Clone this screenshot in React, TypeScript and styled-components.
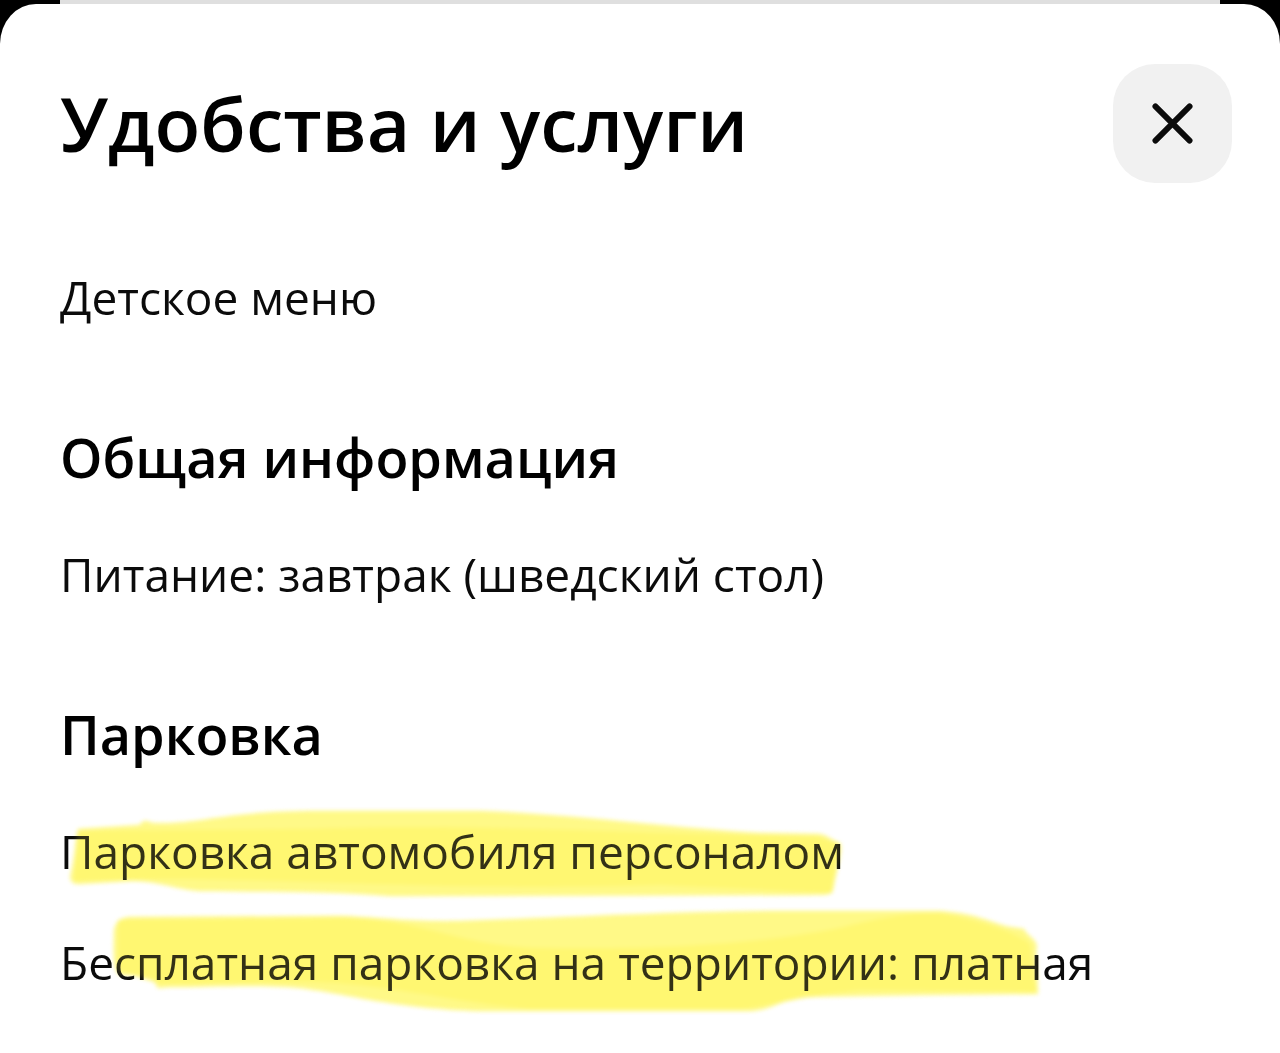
import React from "react";
import styled, { createGlobalStyle } from "styled-components";

const GlobalStyle = createGlobalStyle`
  * { box-sizing: border-box; }
  body {
    margin: 0;
    background: #fff;
    color: #0b0b0b;
    font-family: "Open Sans", "Noto Sans", sans-serif;
  }
  h1, h2, p, ul { margin: 0; padding: 0; }
`;

const Backdrop = styled.div`
  background: linear-gradient(#000, #000) 0 0 / 100% 60px no-repeat;
`;

const PreviousSheet = styled.div`
  height: 4px;
  margin: 0 60px;
  background: #dfdfdf;
`;

const Sheet = styled.main`
  min-height: calc(100vh - 4px);
  padding: 60px 48px 40px 60px;
  border-radius: 36px 36px 0 0 / 40px 40px 0 0;
  background: #fff;
`;

const Header = styled.header`
  display: flex;
  justify-content: space-between;
  align-items: flex-start;
  margin-bottom: 84px;
`;

const Title = styled.h1`
  font-size: 75px;
  line-height: 118px;
  font-weight: 600;
  color: #000;
`;

const CloseButton = styled.button`
  display: flex;
  align-items: center;
  justify-content: center;
  flex: none;
  width: 119px;
  height: 119px;
  padding: 0;
  border: 0;
  border-radius: 42px;
  background: #f1f1f1;
  color: #0b0b0b;
  cursor: pointer;
`;

const Section = styled.section`
  & + & { margin-top: 93px; }
`;

const SectionTitle = styled.h2`
  margin-bottom: 50px;
  font-size: 54px;
  line-height: 74px;
  font-weight: 600;
  color: #000;
`;

const List = styled.ul`
  display: flex;
  flex-direction: column;
  align-items: flex-start;
  gap: 51px;
  list-style: none;
`;

const Item = styled.li`
  position: relative;
  font-size: 46px;
  line-height: 60px;
`;

const Marker = styled.svg<{ $tint?: boolean }>`
  position: absolute;
  left: 0;
  top: 0;
  overflow: visible;
  pointer-events: none;
  filter: blur(2px);
  opacity: ${(p) => (p.$tint ? 0.16 : 1)};
  mix-blend-mode: ${(p) => (p.$tint ? "normal" : "multiply")};
`;

type Stroke = { width: number; base: string; overlap: string };

const valetStroke: Stroke = {
  width: 777,
  base: "M18 8 L80 4 Q83 -3 92 2 C140 4 160 -9 250 -10 L420 -10 C520 -6 620 8 700 12 L758 13 C768 14 772 20 780 22 C783 30 776 50 773 68 C770 76 764 73 750 74 L330 75 C270 70 210 71 140 70 C112 68 102 60 70 60 L18 63 Q8 62 11 52 Q14 40 16 20 Z",
  overlap: "M18 10 L250 8 C400 2 560 12 758 16 L780 24 L772 72 L600 64 C400 70 250 58 100 58 L14 60 Z",
};

const freeStroke: Stroke = {
  width: 1016,
  base: "M70 -15 L280 -16 C330 -14 350 -10 400 -11 C500 -14 600 -20 720 -21 L880 -21 C920 -18 930 -9 950 -5 L964 -3 C966 4 980 8 976 18 L978 62 L860 63 L740 65 C715 71 710 78 690 79 L420 79 C330 76 290 62 240 56 C200 52 150 55 110 55 L98 56 C94 50 96 44 85 44 L60 43 C52 38 54 18 54 0 Q55 -14 70 -15 Z",
  overlap: "M58 -12 L290 -14 C370 -10 400 14 480 16 C600 18 700 12 780 -4 C820 -14 850 -20 885 -18 C930 -8 955 0 970 12 L976 60 L800 58 C740 64 700 76 680 77 L470 77 C390 70 330 52 250 50 L100 52 L58 38 Z",
};

function Highlight({ stroke }: { stroke: Stroke }) {
  const shapes = (
    <>
      <path d={stroke.base} fill="#fff987" />
      <path d={stroke.overlap} fill="#fff66c" opacity="0.8" />
    </>
  );
  const box = `0 0 ${stroke.width} 60`;
  return (
    <>
      <Marker width={stroke.width} height="60" viewBox={box} aria-hidden="true">{shapes}</Marker>
      <Marker $tint width={stroke.width} height="60" viewBox={box} aria-hidden="true">{shapes}</Marker>
    </>
  );
}

export default function App() {
  return (
    <>
      <GlobalStyle />
      <Backdrop>
        <PreviousSheet />
        <Sheet>
          <Header>
            <Title>Удобства и услуги</Title>
            <CloseButton type="button" aria-label="Закрыть">
              <svg width="41" height="41" viewBox="0 0 42 42" fill="none" stroke="currentColor" strokeWidth="6" strokeLinecap="round">
                <path d="M3.5 3.5 38.5 38.5M38.5 3.5 3.5 38.5" />
              </svg>
            </CloseButton>
          </Header>
          <Section>
            <List>
              <Item>Детское меню</Item>
            </List>
          </Section>
          <Section>
            <SectionTitle>Общая информация</SectionTitle>
            <List>
              <Item>Питание: завтрак (шведский стол)</Item>
            </List>
          </Section>
          <Section>
            <SectionTitle>Парковка</SectionTitle>
            <List>
              <Item>Парковка автомобиля персоналом<Highlight stroke={valetStroke} /></Item>
              <Item>Бесплатная парковка на территории: платная<Highlight stroke={freeStroke} /></Item>
            </List>
          </Section>
        </Sheet>
      </Backdrop>
    </>
  );
}
